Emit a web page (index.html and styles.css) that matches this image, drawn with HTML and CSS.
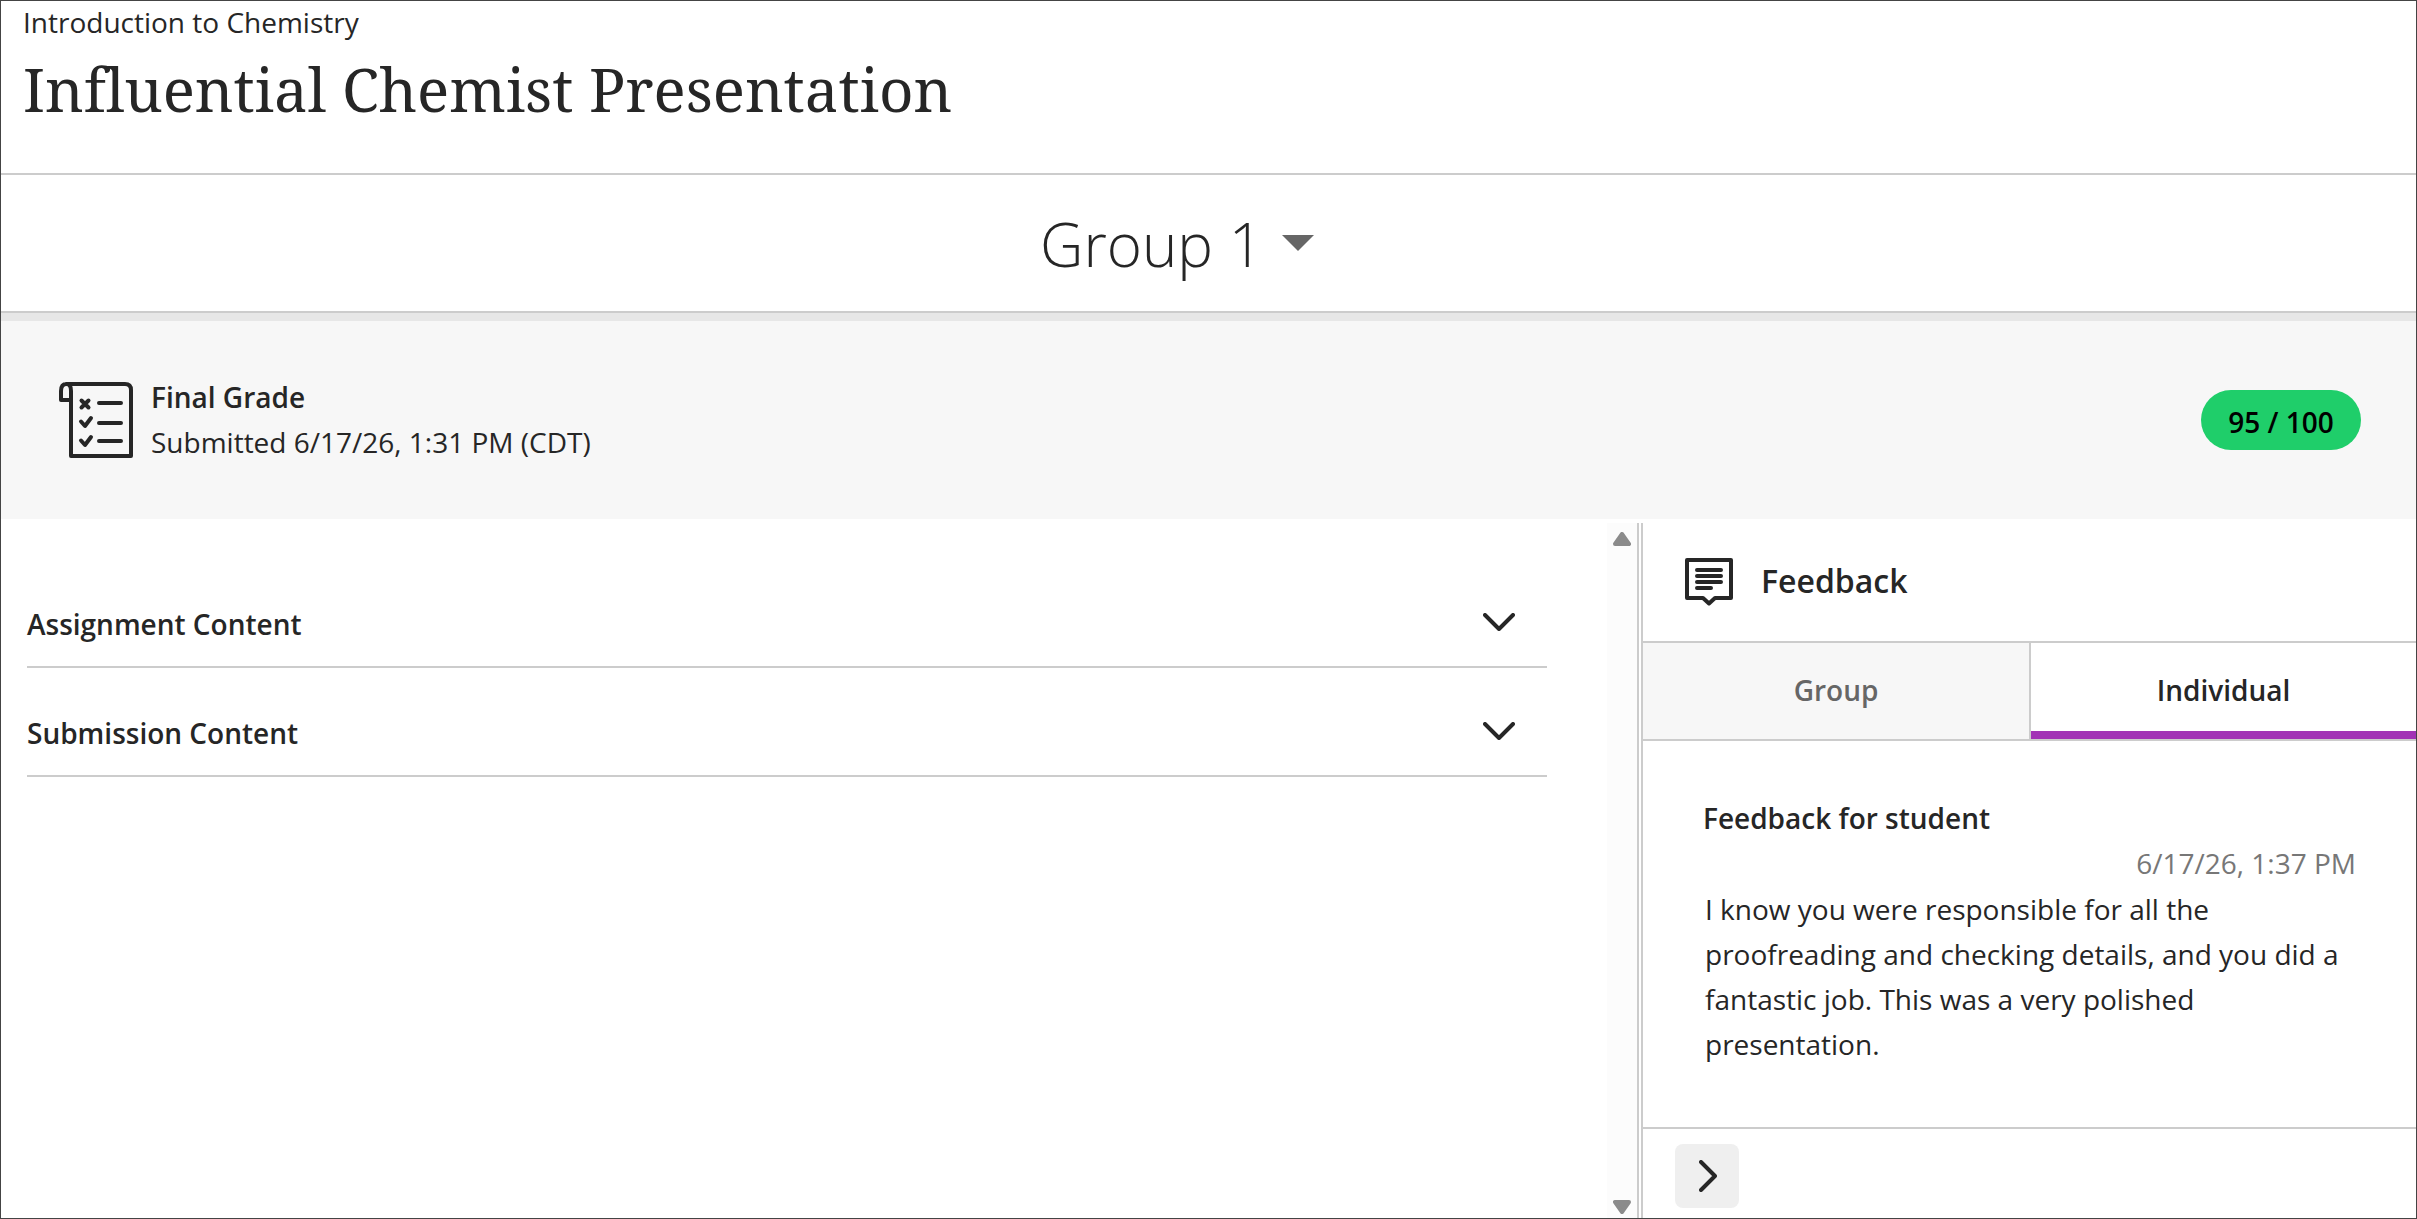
FILE: index.html
```html
<!DOCTYPE html>
<html lang="en">

<head>
    <meta charset="UTF-8">
    <meta name="viewport" content="width=device-width, initial-scale=1.0">
    <title>Influential Chemist Presentation</title>
    <link rel="stylesheet" href="styles.css">
</head>

<body>
    <div class="page">
        <header class="header">
            <div class="course">Introduction to Chemistry</div>
            <h1 class="title">Influential Chemist Presentation</h1>
        </header>

        <div class="group-bar">
            <span class="group-name">Group 1</span>
            <span class="caret"></span>
        </div>

        <section class="grade">
            <svg class="grade-icon" viewBox="0 0 74 76" fill="none" stroke="#262626" stroke-width="4" stroke-linecap="round" stroke-linejoin="round">
                <path d="M7 2H66Q72 2 72 8V74H12V9Q12 2 7.500 2Q2 2 2 9V18H12" />
                <path d="M40 21H62M40 41H62M40 59H62" />
                <path d="M22.500 18.500L29.500 25.500M29.500 18.500L22.500 25.500M22 39.500L26 44L32 36M22 58.500L26 63L32 55" />
            </svg>
            <div class="grade-text">
                <strong>Final Grade</strong>
                <span>Submitted 6/17/26, 1:31 PM (CDT)</span>
            </div>
            <div class="pill">95 / 100</div>
        </section>

        <main class="main">
            <div class="content">
                <div class="row">
                    <span>Assignment Content</span>
                    <svg class="chevron" viewBox="0 0 32 18"><path d="M2 2L16 16L30 2" /></svg>
                </div>
                <div class="row">
                    <span>Submission Content</span>
                    <svg class="chevron" viewBox="0 0 32 18"><path d="M2 2L16 16L30 2" /></svg>
                </div>
            </div>

            <div class="scrollbar">
                <svg class="arrow" viewBox="0 0 18 14"><path d="M9 2L16 12H2Z" /></svg>
                <svg class="arrow" viewBox="0 0 18 14"><path d="M2 2H16L9 12Z" /></svg>
            </div>

            <aside class="feedback">
                <div class="feedback-header">
                    <svg class="feedback-icon" viewBox="0 0 48 48" fill="none" stroke="#262626" stroke-width="4" stroke-linecap="round" stroke-linejoin="round">
                        <path d="M2 2H46V40H30L24 45.500L18 40H2Z" />
                        <path d="M12 12H36M12 18H36M12 24H36M12 30H26" />
                    </svg>
                    <h2>Feedback</h2>
                </div>
                <div class="tabs">
                    <div class="tab">Group</div>
                    <div class="tab active">Individual</div>
                </div>
                <div class="comment">
                    <h3>Feedback for student</h3>
                    <div class="date">6/17/26, 1:37 PM</div>
                    <p>I know you were responsible for all the proofreading and checking details, and you did a fantastic job. This was a very polished presentation.</p>
                </div>
                <div class="footer">
                    <button type="button" class="next" aria-label="Collapse">
                        <svg viewBox="0 0 18 32"><path d="M2 2L16 16L2 30" /></svg>
                    </button>
                </div>
            </aside>
        </main>
    </div>
</body>

</html>
```
FILE: styles.css
```css
* {
    box-sizing: border-box;
}

body {
    margin: 0;
    background-color: #fff;
    color: #262626;
    font-family: "Open Sans", sans-serif;
    font-size: 28px;
    line-height: 45px;
}

h1, h2, h3, p {
    margin: 0;
}

.page {
    display: flex;
    flex-direction: column;
    height: 1219px;
    border: 1px solid #444;
}

.header {
    height: 174px;
    padding-left: 22px;
    border-bottom: 2px solid #ccc;
}

.course {
    line-height: 43px;
}

.title {
    margin-top: 2px;
    font-family: "Noto Serif", "DejaVu Serif Condensed", "DejaVu Serif", serif;
    font-size: 60px;
    font-weight: 400;
    line-height: 86px;
    letter-spacing: 0.03px;
    font-variant-ligatures: common-ligatures;
    white-space: nowrap;
}

.group-bar {
    display: flex;
    height: 146px;
    padding: 24px 0 0 1039px;
    border-bottom: 8px solid #e7e7e7;
    box-shadow: inset 0 -2px #ccc;
}

.group-name {
    width: 242px;
    font-size: 60px;
    font-weight: 300;
    line-height: 90px;
}

.caret {
    margin-top: 36px;
    width: 32px;
    height: 16px;
    background-color: #666;
    clip-path: polygon(0 0, 100% 0, 50% 100%);
}

.grade {
    display: flex;
    align-items: center;
    height: 198px;
    padding: 0 55px 0 58px;
    background-color: #f7f7f7;
}

.grade-icon {
    width: 74px;
    height: 76px;
}

.grade-text {
    display: flex;
    flex-direction: column;
    margin-left: 18px;
}

.grade-text strong {
    font-weight: 600;
}

.pill {
    width: 160px;
    height: 60px;
    margin-left: auto;
    padding-top: 2px;
    border-radius: 30px;
    background-color: #1fce6a;
    color: #000;
    font-weight: 600;
    line-height: 60px;
    text-align: center;
}

.main {
    display: grid;
    grid-template-columns: 1606px 32px minmax(0, 1fr);
    flex: 1;
    margin-top: 4px;
}

.content {
    padding: 36px 60px 0 26px;
}

.row {
    display: flex;
    align-items: center;
    justify-content: space-between;
    height: 109px;
    padding: 19px 32px 0 0;
    border-bottom: 2px solid #ccc;
    font-weight: 600;
}

.row span {
    margin-top: 4px;
}

.chevron {
    width: 32px;
    height: 18px;
}

.chevron path, .next path {
    fill: none;
    stroke: #262626;
    stroke-width: 4;
    stroke-linecap: round;
    stroke-linejoin: round;
}

.scrollbar {
    display: flex;
    flex-direction: column;
    align-items: center;
    justify-content: space-between;
    padding: 9px 0 4px 0;
    border-right: 2px solid #ccc;
    background-color: #fcfcfc;
}

.arrow {
    width: 18px;
    height: 14px;
    fill: #8b8b8b;
    stroke: #8b8b8b;
    stroke-width: 4;
    stroke-linejoin: round;
}

.feedback {
    display: flex;
    flex-direction: column;
    min-width: 0;
    margin-left: 2px;
    border-left: 2px solid #ccc;
}

.feedback-header {
    display: flex;
    align-items: center;
    height: 118px;
    padding-left: 42px;
}

.feedback-icon {
    width: 48px;
    height: 48px;
}

.feedback-header h2 {
    margin: -4px 0 0 28px;
    font-size: 32px;
    font-weight: 600;
}

.tabs {
    display: flex;
    height: 100px;
    border-top: 2px solid #ccc;
    border-bottom: 2px solid #ccc;
}

.tab {
    flex: none;
    width: 388px;
    border-right: 2px solid #ccc;
    background-color: #f7f7f7;
    color: #666;
    font-weight: 600;
    line-height: 95px;
    text-align: center;
}

.tab.active {
    flex: 1;
    border-right: 0;
    border-bottom: 8px solid #a233b5;
    background-color: #fff;
    color: #262626;
}

.comment {
    flex: 1;
    padding: 55px 60px 0 60px;
}

.comment h3 {
    font-size: 28px;
    font-weight: 600;
}

.date {
    color: #777;
    text-align: right;
}

.comment p {
    padding: 1px 0 0 2px;
}

.footer {
    height: 91px;
    padding: 15px 0 0 32px;
    border-top: 2px solid #ccc;
}

.next {
    display: flex;
    align-items: center;
    justify-content: center;
    width: 64px;
    height: 64px;
    padding: 0 0 0 2px;
    border: 0;
    border-radius: 8px;
    background-color: #efefef;
}

.next svg {
    width: 18px;
    height: 32px;
}
```
